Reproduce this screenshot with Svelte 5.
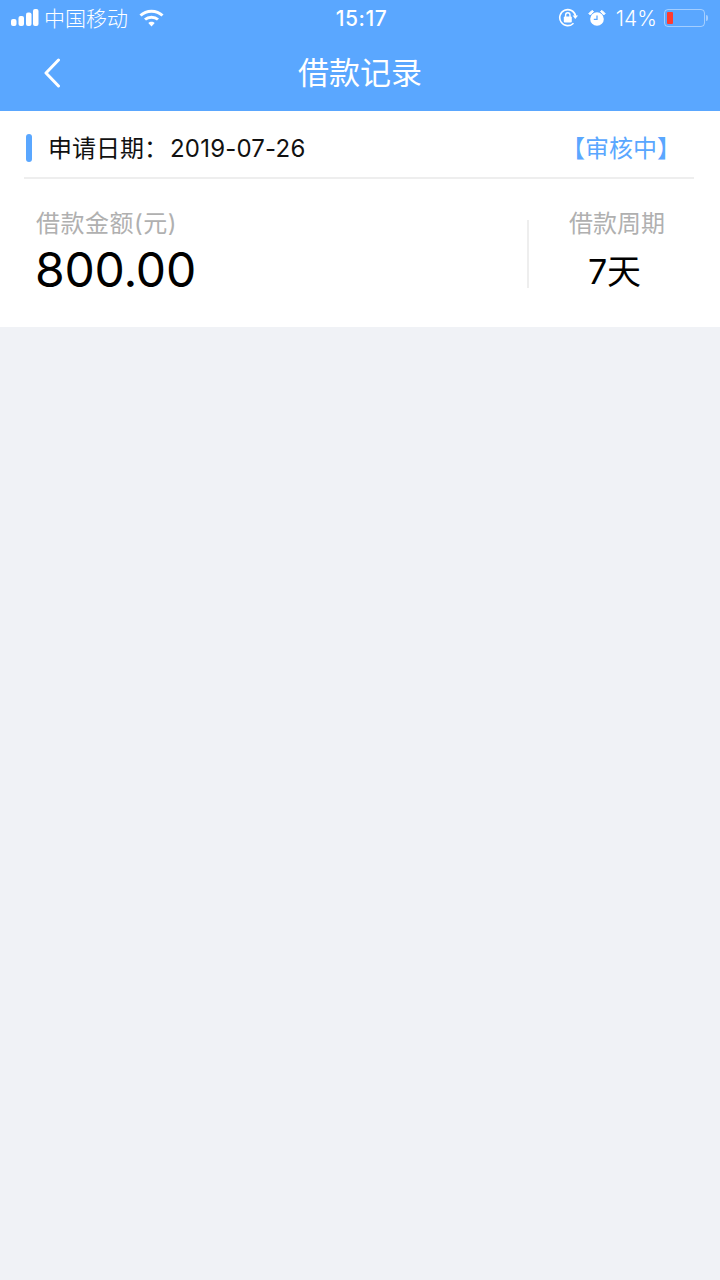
<script>
  const record = {
    date: '2019-07-26',
    status: '【审核中】',
    amount: '800.00',
    period: '7天'
  };
</script>

<div class="page">
  <header class="top">
    <div class="status-bar">
      <div class="side left">
        <svg class="signal" width="28" height="18" viewBox="0 0 28 18">
          <rect x="0" y="10" width="5.500" height="7" rx="2" fill="#fff" />
          <rect x="7.500" y="7" width="5.500" height="10" rx="2" fill="#fff" />
          <rect x="15" y="3.500" width="5.500" height="13.500" rx="2" fill="#fff" />
          <rect x="22" y="0" width="5.500" height="17" rx="2" fill="#fff" />
        </svg>
        <span class="carrier">中国移动</span>
        <svg class="wifi" width="25" height="18" viewBox="0 0 25 18">
          <path d="M1.500 6.500C7.500 .8 17.500 .8 23.500 6.500" fill="none" stroke="#fff" stroke-width="3" />
          <path d="M6 10.500C9.500 7.400 15.500 7.400 19 10.500" fill="none" stroke="#fff" stroke-width="3" />
          <path d="M9.300 14C11 12.300 14 12.300 15.700 14L12.500 17.500Z" fill="#fff" />
        </svg>
      </div>
      <span class="time">15:17</span>
      <div class="side right">
        <svg width="20" height="20" viewBox="0 0 20 20">
          <path d="M15.500 15.200A8 8 0 1 1 17.600 8" fill="none" stroke="#fff" stroke-width="1.600" />
          <path d="M14.600 7.400H20L17.300 11Z" fill="#fff" />
          <rect x="5.800" y="8.600" width="8" height="6" rx="1" fill="#fff" />
          <path d="M7.600 9V7a2.200 2.200 0 0 1 4.400 0v2" fill="none" stroke="#fff" stroke-width="1.400" />
        </svg>
        <svg class="alarm" width="18" height="18" viewBox="0 0 18 18">
          <circle cx="9" cy="10" r="6.800" fill="#fff" />
          <path d="M9 6.400V10.400H5.800" fill="none" stroke="#5aa7ff" stroke-width="1.300" />
          <path d="M.8 4.600 4 1.400 5.600 2.600 2 5.800ZM17.200 4.600 14 1.400 12.400 2.600 16 5.800Z" fill="#fff" stroke="#fff" stroke-linejoin="round" />
        </svg>
        <span class="percent">14%</span>
        <div class="battery">
          <div class="battery-body"><div class="battery-level"></div></div>
          <div class="battery-tip"></div>
        </div>
      </div>
    </div>
    <div class="nav-bar">
      <button class="back" aria-label="返回">
        <svg width="18" height="30" viewBox="0 0 18 30">
          <path d="M15.500 2 3 15 15.500 28" fill="none" stroke="#fff" stroke-width="3" stroke-linecap="round" stroke-linejoin="round" />
        </svg>
      </button>
      <h1>借款记录</h1>
    </div>
  </header>

  <section class="card">
    <div class="card-head">
      <div class="date">
        <span class="mark"></span>
        <span class="head-text">申请日期：<span class="date-value">{record.date}</span></span>
      </div>
      <span class="head-text state">{record.status}</span>
    </div>
    <div class="card-body">
      <div class="amount">
        <div class="label wide">借款金额(元)</div>
        <div class="amount-value">{record.amount}</div>
      </div>
      <div class="divider"></div>
      <div class="period">
        <div class="label">借款周期</div>
        <div class="period-value">{record.period}</div>
      </div>
    </div>
  </section>
</div>

<style>
  :global(body) {
    margin: 0;
    background: #f0f2f6;
  }

  .page {
    min-height: 1280px;
    background: #f0f2f6;
    font-family: Inter, "Noto Sans CJK SC", sans-serif;
  }

  .top {
    background: #5aa7ff;
    color: #fff;
    height: 111px;
  }

  .status-bar {
    height: 36px;
    display: grid;
    grid-template-columns: 1fr auto 1fr;
    align-items: center;
    padding: 0 11px;
  }

  .side {
    display: flex;
    align-items: center;
  }

  .left {
    gap: 5px;
  }

  .right {
    justify-content: flex-end;
    gap: 10px;
    padding-right: 1px;
  }

  .carrier {
    font-size: 21px;
    font-weight: 300;
    margin-bottom: 2px;
  }

  .wifi {
    margin-left: 6px;
  }

  .time {
    font-size: 21px;
    font-weight: 500;
    letter-spacing: 0.5px;
    margin-left: 3px;
  }

  .percent {
    font-size: 21px;
    font-weight: 300;
  }

  .battery {
    display: flex;
    align-items: center;
    margin-left: -3px;
  }

  .battery-body {
    width: 41px;
    height: 18px;
    box-sizing: border-box;
    border: 1.500px solid rgba(255, 255, 255, 0.45);
    border-radius: 4px;
    padding: 2px;
  }

  .battery-level {
    width: 6px;
    height: 100%;
    background: #ff3b30;
    border-radius: 1px;
  }

  .battery-tip {
    width: 2px;
    height: 6px;
    margin-left: 1px;
    background: rgba(255, 255, 255, 0.45);
    border-radius: 0 2px 2px 0;
  }

  .nav-bar {
    height: 75px;
    display: flex;
    align-items: center;
    justify-content: center;
    position: relative;
    padding-bottom: 6px;
    box-sizing: border-box;
  }

  .nav-bar h1 {
    margin: 0;
    font-size: 31px;
    font-weight: 400;
  }

  .back {
    position: absolute;
    left: 43px;
    top: 22px;
    padding: 0;
    border: none;
    background: none;
    display: flex;
  }

  .card {
    background: #fff;
    height: 216px;
    padding: 0 26px 0 24px;
  }

  .card-head {
    height: 68px;
    box-sizing: border-box;
    padding-top: 8px;
    border-bottom: 2px solid #eeeeee;
    display: flex;
    align-items: center;
    justify-content: space-between;
    font-size: 24px;
    color: #111;
  }

  .date {
    display: flex;
    align-items: center;
    gap: 16px;
    padding-left: 2px;
  }

  .head-text {
    margin-bottom: 4px;
  }

  .date-value {
    margin-left: 2px;
    letter-spacing: 0.2px;
  }

  .mark {
    width: 6px;
    height: 28px;
    background: #5aa7ff;
    border-radius: 3px;
  }

  .state {
    color: #5aa7ff;
    margin-right: 13px;
  }

  .card-body {
    display: flex;
    align-items: flex-start;
    padding-top: 29px;
  }

  .label {
    color: #b0b0b0;
    font-size: 24px;
    line-height: 32px;
  }

  .label.wide {
    letter-spacing: 0.5px;
  }

  .amount {
    flex: 1;
    padding-left: 12px;
  }

  .amount-value {
    color: #000;
    font-size: 48px;
    line-height: 60px;
    letter-spacing: -0.2px;
    margin-left: -1px;
  }

  .divider {
    width: 2px;
    height: 68px;
    margin-top: 12px;
    background: #eeeeee;
  }

  .period {
    width: 165px;
    box-sizing: border-box;
    text-align: center;
    padding-left: 11px;
  }

  .period-value {
    color: #000;
    font-size: 34px;
    line-height: 44px;
    margin-top: 10px;
    margin-right: 5px;
  }
</style>
